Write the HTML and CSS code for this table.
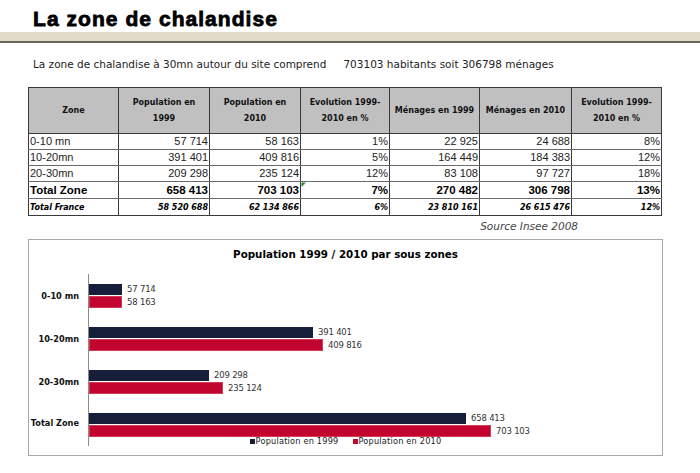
FILE: index.html
```html
<!DOCTYPE html>
<html lang="fr">
<head>
<meta charset="utf-8">
<title>La zone de chalandise</title>
<link rel="stylesheet" href="styles.css">
</head>
<body>
<header class="page-head">
  <h1 class="title">La zone de chalandise</h1>
  <div class="band"></div>
</header>

<p class="intro">La zone de chalandise à 30mn autour du site comprend<span class="gap"></span>703103 habitants soit 306798 ménages</p>

<table class="data">
  <colgroup>
    <col class="c1"><col class="c2"><col class="c3"><col class="c4"><col class="c5"><col class="c6"><col class="c7">
  </colgroup>
  <thead>
    <tr>
      <th>Zone</th>
      <th>Population en<br>1999</th>
      <th>Population en<br>2010</th>
      <th>Evolution 1999-<br>2010 en %</th>
      <th>Ménages en 1999</th>
      <th>Ménages en 2010</th>
      <th>Evolution 1999-<br>2010 en %</th>
    </tr>
  </thead>
  <tbody>
    <tr><td class="zone">0-10 mn</td><td>57 714</td><td>58 163</td><td>1%</td><td>22 925</td><td>24 688</td><td>8%</td></tr>
    <tr><td class="zone">10-20mn</td><td>391 401</td><td>409 816</td><td>5%</td><td>164 449</td><td>184 383</td><td>12%</td></tr>
    <tr><td class="zone">20-30mn</td><td>209 298</td><td>235 124</td><td>12%</td><td>83 108</td><td>97 727</td><td>18%</td></tr>
    <tr class="total"><td class="zone">Total Zone</td><td>658 413</td><td>703 103</td><td class="flag">7%</td><td>270 482</td><td>306 798</td><td>13%</td></tr>
    <tr class="france"><td class="zone">Total France</td><td>58 520 688</td><td>62 134 866</td><td>6%</td><td>23 810 161</td><td>26 615 476</td><td>12%</td></tr>
  </tbody>
</table>

<p class="source">Source Insee 2008</p>

<section class="chart">
  <h2 class="chart-title">Population 1999 / 2010 par sous zones</h2>
  <div class="plot">
    <div class="axis"></div>

    <div class="cat r1">0-10 mn</div>
    <div class="group r1">
      <div class="bar-row"><div class="bar navy" style="width:33px"></div><span class="val">57 714</span></div>
      <div class="bar-row"><div class="bar red" style="width:33px"></div><span class="val">58 163</span></div>
    </div>

    <div class="cat r2">10-20mn</div>
    <div class="group r2">
      <div class="bar-row"><div class="bar navy" style="width:224px"></div><span class="val">391 401</span></div>
      <div class="bar-row"><div class="bar red" style="width:234px"></div><span class="val">409 816</span></div>
    </div>

    <div class="cat r3">20-30mn</div>
    <div class="group r3">
      <div class="bar-row"><div class="bar navy" style="width:120px"></div><span class="val">209 298</span></div>
      <div class="bar-row"><div class="bar red" style="width:134px"></div><span class="val">235 124</span></div>
    </div>

    <div class="cat r4">Total Zone</div>
    <div class="group r4">
      <div class="bar-row"><div class="bar navy" style="width:377px"></div><span class="val">658 413</span></div>
      <div class="bar-row"><div class="bar red" style="width:402px"></div><span class="val">703 103</span></div>
    </div>

    <div class="legend">
      <span class="key"><i class="swatch navy"></i>Population en 1999</span>
      <span class="key"><i class="swatch red"></i>Population en 2010</span>
    </div>
  </div>
</section>
</body>
</html>
```

FILE: styles.css
```css
html, body {
  margin: 0;
  padding: 0;
  background: #ffffff;
}

body {
  width: 700px;
  font-family: "DejaVu Sans", sans-serif;
  color: #1a1a1a;
}

.page-head {
  padding-top: 6px;
}

.title {
  margin: 0 0 0 33px;
  height: 26px;
  font-family: "Liberation Sans", Arial, sans-serif;
  font-weight: 900;
  font-size: 21px;
  line-height: 26px;
  letter-spacing: 1.05px;
  color: #000;
  -webkit-text-stroke: 0.8px #000;
}

.band {
  height: 9px;
  background: #e0dcc8;
  border-bottom: 2px solid #66655d;
}

.intro {
  margin: 14px 0 0 33px;
  font-size: 10.5px;
  line-height: 14px;
  color: #222;
}

.gap {
  display: inline-block;
  width: 17px;
}

.data {
  margin: 16px 0 0 28px;
  border-collapse: collapse;
  table-layout: fixed;
  width: 634px;
  font-family: "Liberation Sans", Arial, sans-serif;
}

.c1 { width: 90px; }
.c2 { width: 91px; }
.c3 { width: 91px; }
.c4 { width: 89px; }
.c5 { width: 90px; }
.c6 { width: 92px; }
.c7 { width: 90px; }

.data th {
  height: 45px;
  background: #c0c0c0;
  border: 1px solid #3a3a3a;
  font-family: "DejaVu Sans", sans-serif;
  font-size: 8px;
  line-height: 16px;
  font-weight: bold;
  text-align: center;
  padding: 0;
  color: #111;
}

.data td {
  height: 15px;
  padding: 0 1px 0 2px;
  border-left: 1px solid #3a3a3a;
  border-right: 1px solid #3a3a3a;
  border-bottom: 1px solid #6a6a6a;
  font-size: 11px;
  line-height: 15px;
  text-align: right;
  white-space: nowrap;
  color: #222;
}

.data td.zone {
  text-align: left;
  padding-left: 1px;
}

.data tr.total td {
  height: 16px;
  font-weight: bold;
  font-size: 11.5px;
  color: #000;
}

.data tr.france td {
  height: 16px;
  font-weight: bold;
  font-style: italic;
  font-family: "DejaVu Sans", sans-serif;
  font-size: 8px;
  border-bottom: 1px solid #3a3a3a;
  color: #000;
}

.data td.flag {
  background: linear-gradient(135deg, #1e8a1e 0, #1e8a1e 3px, transparent 3px);
}

.source {
  margin: 3px 0 0 0;
  width: 578px;
  text-align: right;
  font-size: 10.5px;
  line-height: 14px;
  font-style: italic;
  color: #444;
}

.chart {
  margin: 6px 0 0 28px;
  width: 633px;
  height: 215px;
  border: 1px solid #a8a8a8;
}

.chart-title {
  margin: 6px 0 0 0;
  text-align: center;
  font-size: 10.3px;
  line-height: 16px;
  font-weight: bold;
  color: #000;
}

.plot {
  margin-top: 12px;
  display: grid;
  grid-template-columns: 59px 1fr;
  grid-template-rows: 43px 43px 43px 34px 9px;
}

.axis {
  grid-column: 2;
  grid-row: 1 / 6;
  border-left: 1px solid #8a8a8a;
}

.cat {
  grid-column: 1;
  align-self: center;
  text-align: right;
  padding-right: 9px;
  font-size: 8.2px;
  font-weight: bold;
  color: #111;
}

.r1 { grid-row: 1; }
.r2 { grid-row: 2; }
.r3 { grid-row: 3; }
.r4 { grid-row: 4; }

.cat.r4 {
  align-self: start;
  margin-top: 15px;
}

.group {
  grid-column: 2;
  display: flex;
  flex-direction: column;
  gap: 1px;
  padding-left: 1px;
  padding-top: 9px;
}

.bar-row {
  display: flex;
  align-items: center;
  height: 12px;
}

.bar {
  height: 12px;
}

.bar.navy {
  background: #161e3a;
  height: 11px;
}

.bar.red {
  background: #c2052f;
  box-shadow: inset 0 0 0 1px #d33a57;
}

.val {
  margin-left: 5px;
  font-size: 8.5px;
  color: #333;
  letter-spacing: -0.2px;
}

.legend {
  grid-column: 1 / 3;
  grid-row: 5;
  display: flex;
  justify-content: center;
  gap: 14px;
  padding-left: 0;
  font-size: 8.2px;
  line-height: 9px;
  color: #222;
  letter-spacing: 0.2px;
}

.key {
  display: flex;
  align-items: center;
}

.swatch {
  display: inline-block;
  width: 5px;
  height: 5px;
  margin-right: 1px;
}

.swatch.navy { background: #161e3a; }
.swatch.red { background: #c2052f; }
```
